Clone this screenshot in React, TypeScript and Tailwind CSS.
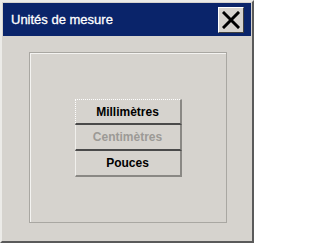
export default function App() {
  const units = [
    { label: "Millimètres", disabled: false, focused: true },
    { label: "Centimètres", disabled: true, focused: false },
    { label: "Pouces", disabled: false, focused: false },
  ];

  return (
    <div
      className="w-[254px] h-[243px] bg-[#d6d3ce] border-t-2 border-l-2 border-t-[#ecebe8] border-l-[#ecebe8] border-r-2 border-b-2 border-r-[#5a5a5a] border-b-[#5a5a5a] flex flex-col"
      style={{ fontFamily: '"Liberation Sans", Arial, sans-serif' }}
    >
      {/* title bar */}
      <div className="mx-px mt-px h-[33px] bg-[#0a246a] flex items-center justify-between pl-[8px] pr-[7px]">
        <span className="text-white text-[13px] [-webkit-text-stroke:0.3px_white]">
          Unités de mesure
        </span>
        <button className="w-[26px] h-[26px] bg-[#d6d3ce] border border-t-white border-l-white border-r-[#404040] border-b-[#404040] flex items-center justify-center">
          <svg width="18" height="18" viewBox="0 0 18 18">
            <path
              d="M2 2 L16 16 M16 2 L2 16"
              stroke="#000"
              strokeWidth="3"
              strokeLinecap="square"
            />
          </svg>
        </button>
      </div>

      {/* content panel */}
      <div className="mt-[16px] ml-[27px] w-[198px] h-[171px] border border-[#a9a7a2] shadow-[inset_1px_1px_0_#f4f3f1] flex flex-col items-center pt-[46px]">
        <div className="w-[107px] flex flex-col">
          {units.map((u, i) => (
            <button
              key={u.label}
              className={
                "h-[26px] flex items-center justify-center text-[12px] font-bold bg-[#d6d3ce] border-r-2 border-r-[#8a8884] " +
                (u.disabled ? "text-[#9c9a96] " : "text-black ") +
                (u.focused
                  ? "border-t border-l [border-top-style:dotted] [border-left-style:dotted] border-t-white border-l-white "
                  : "border-l border-l-[#f0efec] ") +
                (i < units.length - 1
                  ? "border-b-2 border-b-[#4a4a4a]"
                  : "border-b-2 border-b-[#8a8884]")
              }
            >
              {u.label}
            </button>
          ))}
        </div>
      </div>
    </div>
  );
}
